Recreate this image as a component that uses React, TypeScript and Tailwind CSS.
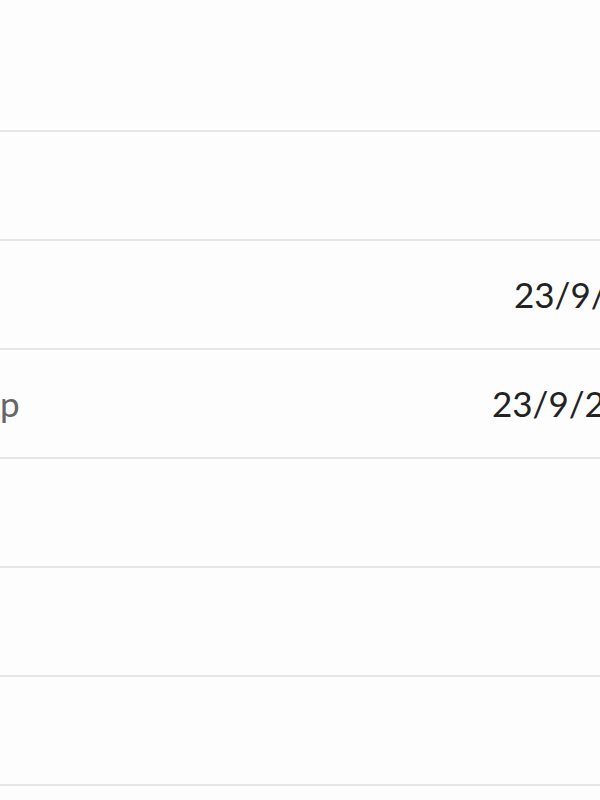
const rows = [
  { left: '', date: '' },
  { left: '', date: '23/9/2023', pad: 'pl-[514px]' },
  { left: 'p', date: '23/9/2023', pad: 'pl-[492px]' },
  { left: '', date: '' },
  { left: '', date: '' },
  { left: '', date: '' },
];

export default function App() {
  return (
    <div className="w-[600px] h-[800px] overflow-hidden bg-[#fdfdfd] font-['Lato',sans-serif]">
      {/* Header space */}
      <div className="h-[130px]" />

      {rows.map((row, index) => (
        <div
          key={index}
          className="relative h-[109px] border-t-2 border-[#e6e6e6] flex items-center whitespace-nowrap"
        >
          {row.left && (
            <span className="absolute left-0 text-[35px] text-[#666] leading-none">{row.left}</span>
          )}
          {row.date && (
            <span className={`${row.pad} text-[35px] text-[#222] leading-none`}>{row.date}</span>
          )}
        </div>
      ))}
      <div className="border-t-2 border-[#e6e6e6]" />
    </div>
  );
}
